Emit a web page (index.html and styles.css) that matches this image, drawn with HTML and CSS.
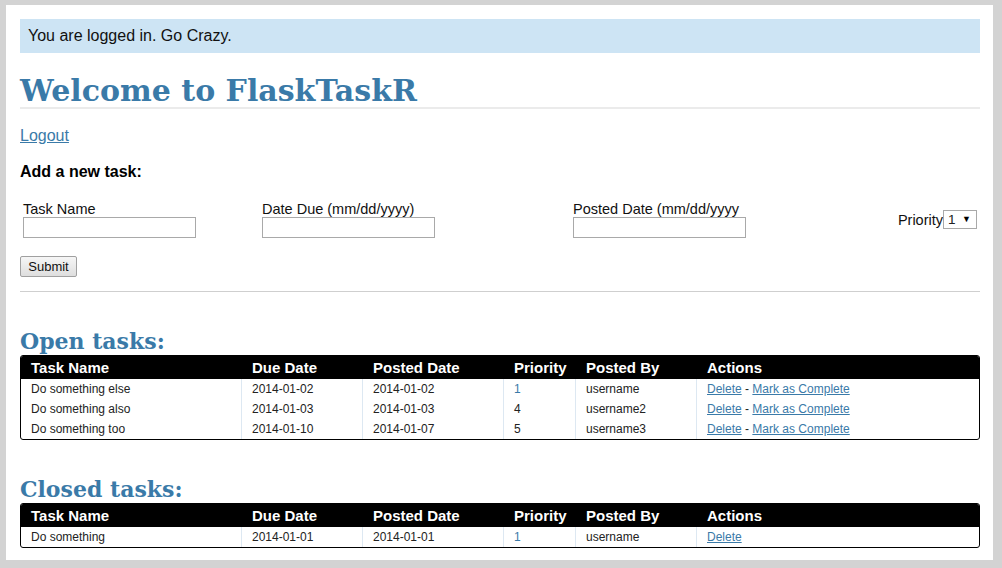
FILE: index.html
```html
<!DOCTYPE html>
<html>
<head>
<meta charset="utf-8">
<title>FlaskTaskR</title>
<link rel="stylesheet" href="styles.css">
</head>
<body>
<div class="page">
  <div class="flash">You are logged in. Go Crazy.</div>
  <h1 class="title">Welcome to FlaskTaskR</h1>
  <a class="logout" href="#">Logout</a>
  <h3 class="add">Add a new task:</h3>
  <form class="task-form">
    <div class="fields">
      <div class="field">
        <label>Task Name</label>
        <input type="text" class="text-in">
      </div>
      <div class="field">
        <label>Date Due (mm/dd/yyyy)</label>
        <input type="text" class="text-in">
      </div>
      <div class="field">
        <label>Posted Date (mm/dd/yyyy</label>
        <input type="text" class="text-in">
      </div>
      <div class="field-priority">
        <span>Priority</span><span class="prio-wrap"><select class="prio"><option>1</option><option>2</option><option>3</option><option>4</option><option>5</option></select></span>
      </div>
    </div>
    <button type="button" class="submit">Submit</button>
  </form>
  <hr class="sep">
  <h2 class="section">Open tasks:</h2>
  <div class="tasks">
    <div class="row head">
      <div>Task Name</div><div>Due Date</div><div>Posted Date</div><div>Priority</div><div>Posted By</div><div>Actions</div>
    </div>
    <div class="row">
      <div>Do something else</div><div>2014-01-02</div><div>2014-01-02</div><div class="p-high">1</div><div>username</div><div><a href="#">Delete</a> - <a href="#">Mark as Complete</a></div>
    </div>
    <div class="row">
      <div>Do something also</div><div>2014-01-03</div><div>2014-01-03</div><div>4</div><div>username2</div><div><a href="#">Delete</a> - <a href="#">Mark as Complete</a></div>
    </div>
    <div class="row">
      <div>Do something too</div><div>2014-01-10</div><div>2014-01-07</div><div>5</div><div>username3</div><div><a href="#">Delete</a> - <a href="#">Mark as Complete</a></div>
    </div>
  </div>
  <h2 class="section closed">Closed tasks:</h2>
  <div class="tasks">
    <div class="row head">
      <div>Task Name</div><div>Due Date</div><div>Posted Date</div><div>Priority</div><div>Posted By</div><div>Actions</div>
    </div>
    <div class="row">
      <div>Do something</div><div>2014-01-01</div><div>2014-01-01</div><div class="p-high">1</div><div>username</div><div><a href="#">Delete</a></div>
    </div>
  </div>
</div>
</body>
</html>
```
FILE: styles.css
```css
html, body {
  margin: 0;
  padding: 0;
}
body {
  background: #d3d3d3;
  font-family: "Liberation Sans", Arial, sans-serif;
  color: #000;
  height: 568px;
  overflow: hidden;
}
.page {
  background: #fff;
  margin: 5px 9px 0 6px;
  height: 555px;
  padding: 14px 13px 0 14px;
  box-sizing: border-box;
}
.flash {
  background: #cde4f4;
  height: 34px;
  line-height: 34px;
  padding: 0 8px;
  font-size: 16px;
  color: #111;
}
.title {
  font-family: Georgia, "DejaVu Serif", serif;
  font-weight: bold;
  font-size: 30px;
  color: #3a7aa8;
  margin: 0;
  padding-top: 21px;
  line-height: 33px;
  padding-bottom: 0;
  border-bottom: 2px solid #ebebeb;
}
.logout {
  display: inline-block;
  margin-top: 17px;
  font-size: 16px;
  color: #3a7aa8;
  line-height: 19px;
}
.add {
  font-size: 16px;
  font-weight: bold;
  margin: 17px 0 0 0;
  line-height: 19px;
}
.task-form {
  margin-top: 20px;
}
.fields {
  display: grid;
  grid-template-columns: 239px 311px 1fr auto;
  align-items: center;
  padding: 0 3px;
}
.field {
  display: flex;
  flex-direction: column;
  align-items: flex-start;
}
.field label {
  font-size: 14.5px;
  line-height: 16px;
  color: #111;
}
.text-in {
  width: 173px;
  height: 21px;
  box-sizing: border-box;
  border: 1px solid #a9a9a9;
  margin: 0;
  padding: 1px 2px;
  font-size: 13px;
}
.field-priority {
  display: flex;
  align-items: center;
  font-size: 14.5px;
  color: #111;
}
.prio-wrap {
  position: relative;
  display: inline-block;
}
.prio-wrap::after {
  content: "\25BC";
  position: absolute;
  right: 6px;
  top: 4px;
  font-size: 9px;
  line-height: 10px;
  color: #000;
  pointer-events: none;
}
.prio {
  -webkit-appearance: none;
  appearance: none;
  display: block;
  width: 34px;
  height: 19px;
  font-size: 13.5px;
  border: 1px solid #a9a9a9;
  border-radius: 0;
  background: #fff;
  margin: 0;
  padding: 0 0 0 4px;
  color: #222;
  font-family: "Liberation Sans", Arial, sans-serif;
}
.submit {
  display: block;
  margin-top: 18px;
  width: 57px;
  height: 21px;
  font-family: "Liberation Sans", Arial, sans-serif;
  font-size: 13px;
  padding: 0;
  border: 1px solid #a0a0a0;
  border-radius: 2px;
  background: linear-gradient(#f6f6f6, #dedede);
  color: #111;
}
.sep {
  border: 0;
  border-top: 1px solid #cfcfcf;
  margin: 14px 0 0 0;
  height: 0;
}
.section {
  font-family: Georgia, "DejaVu Serif", serif;
  font-weight: bold;
  font-size: 22px;
  color: #3a7aa8;
  margin: 36px 0 0 0;
  line-height: 27px;
}
.section.closed {
  margin-top: 36px;
}
.tasks {
  border: 1px solid #000;
  border-radius: 3px;
  overflow: hidden;
}
.row {
  display: grid;
  grid-template-columns: 220px 121px 141px 72px 121px 1fr;
  font-size: 12px;
  line-height: 20px;
  color: #222;
}
.row > div {
  padding-left: 10px;
  border-left: 1px solid #dde8f2;
  white-space: nowrap;
}
.row > div:first-child {
  border-left: 0;
}
.row.head {
  background: #000;
  color: #fff;
  font-weight: bold;
  font-size: 15px;
  line-height: 23px;
}
.row.head > div {
  border-left-color: #000;
}
.row a {
  color: #3a7aa8;
}
.p-high {
  color: #3a7aa8;
}
```
